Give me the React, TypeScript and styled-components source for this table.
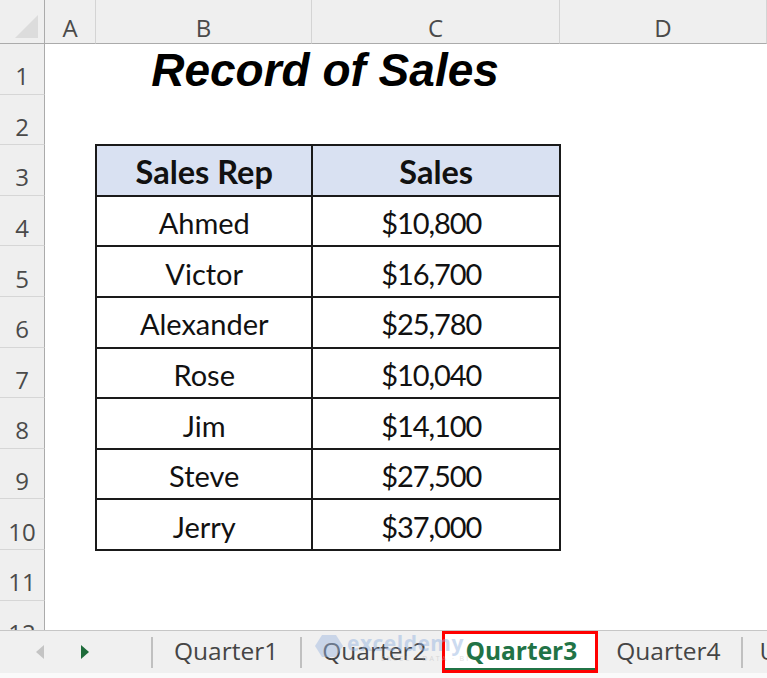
import React from "react";
import styled, { createGlobalStyle, css } from "styled-components";

const Global = createGlobalStyle`
  html, body { margin: 0; padding: 0; background: #ffffff; overflow: hidden; }
  #root { width: 767px; height: 678px; }
`;

const Window = styled.div`
  width: 767px;
  height: 678px;
  display: flex;
  flex-direction: column;
  overflow: hidden;
  background: #ffffff;
`;

const Sheet = styled.div`
  flex: 1;
  min-height: 0;
  display: grid;
  grid-template-columns: 45px 51px 216px 248px 207px 1fr;
  grid-template-rows: 44px repeat(12, 50.6px);
  overflow: hidden;
`;

const headerFont = css`
  font-family: "Open Sans", "Noto Sans", sans-serif;
  font-size: 24px;
  color: #4a4a4a;
`;

const Corner = styled.div`
  background: #efefef;
  border-right: 1px solid #ababab;
  border-bottom: 1px solid #ababab;
  position: relative;
  &::after {
    content: "";
    position: absolute;
    right: 6px;
    bottom: 5px;
    width: 0;
    height: 0;
    border-left: 23px solid transparent;
    border-bottom: 23px solid #dcdcdc;
  }
`;

const ColHead = styled.div<{ $last?: boolean }>`
  ${headerFont};
  background: #efefef;
  border-bottom: 1px solid #ababab;
  border-right: ${(p) => (p.$last ? "none" : "1px solid #d4d4d4")};
  display: flex;
  align-items: center;
  justify-content: center;
  padding-top: 11px;
  box-sizing: border-box;
`;

const RowHead = styled.div<{ $row: number }>`
  ${headerFont};
  grid-column: 1;
  grid-row: ${(p) => p.$row + 1};
  background: #efefef;
  border-right: 1px solid #ababab;
  border-bottom: 1px solid #d6d6d6;
  display: flex;
  align-items: center;
  justify-content: center;
  padding-top: 14px;
  box-sizing: border-box;
`;

const Title = styled.div`
  grid-column: 3 / span 2;
  grid-row: 2;
  display: flex;
  align-items: center;
  justify-content: center;
  font-family: "Liberation Sans", Arial, sans-serif;
  font-weight: bold;
  font-style: italic;
  font-size: 46px;
  color: #000000;
  padding: 2px 6px 0 0;
`;

const TableWrap = styled.div`
  grid-column: 3 / span 2;
  grid-row: 4 / span 8;
  margin: -1px -1px 0 -1px;
`;

const Table = styled.table`
  border-collapse: collapse;
  width: 466px;
  font-family: Lato, "Open Sans", sans-serif;
  font-size: 29px;
  color: #111111;
`;

const Tr = styled.tr`
  height: 50.6px;
`;

const Th = styled.th<{ $w: number }>`
  width: ${(p) => p.$w}px;
  padding: 3px 0 0 0;
  line-height: 1.1;
  background: #d9e1f2;
  border: 2px solid #1a1a1a;
  font-weight: bold;
  font-size: 32.5px;
  text-align: center;
`;

const Td = styled.td<{ $num?: boolean }>`
  padding: 4px ${(p) => (p.$num ? "10px" : "0")} 0 0;
  line-height: 1.1;
  border: 2px solid #1a1a1a;
  text-align: center;
  font-weight: normal;
  letter-spacing: ${(p) => (p.$num ? "-1.1px" : "0")};
`;

const TabBar = styled.div`
  height: 48px;
  flex-shrink: 0;
  box-sizing: border-box;
  border-top: 1px solid #c6c6c6;
  background: #f0f0f0;
  border-bottom: 5px solid #fafafa;
  display: flex;
  align-items: stretch;
  position: relative;
  overflow: hidden;
`;

const Nav = styled.div`
  width: 151px;
  flex-shrink: 0;
  display: flex;
  align-items: center;
  padding-left: 36px;
  gap: 37px;
  box-sizing: border-box;
`;

const Arrow = styled.span<{ $dir: "left" | "right"; $color: string }>`
  width: 0;
  height: 0;
  border-top: 7px solid transparent;
  border-bottom: 7px solid transparent;
  ${(p) =>
    p.$dir === "left"
      ? `border-right: 8px solid ${p.$color};`
      : `border-left: 8px solid ${p.$color};`}
`;

const Sep = styled.span`
  width: 2px;
  align-self: center;
  height: 31px;
  background: #c0c0c0;
  flex-shrink: 0;
`;

const Tab = styled.div<{ $active?: boolean; $pl: number; $pr: number }>`
  font-family: "Open Sans", "Noto Sans", sans-serif;
  font-size: 24.5px;
  display: flex;
  align-items: center;
  justify-content: center;
  padding: 0 ${(p) => p.$pr}px 3px ${(p) => p.$pl}px;
  color: #454545;
  flex-shrink: 0;
  white-space: nowrap;
  ${(p) =>
    p.$active &&
    css`
      background: #ffffff;
      color: #217346;
      font-weight: bold;
      border: 3px solid #ff0000;
      box-shadow: inset 0 -2px 0 #217346;
    `}
`;

const Watermark = styled.div`
  position: absolute;
  left: 314px;
  top: 2px;
  display: flex;
  align-items: flex-start;
  gap: 3px;
  opacity: 0.45;
  pointer-events: none;
`;

const MarkText = styled.div`
  display: flex;
  flex-direction: column;
  line-height: 1;
`;

const MarkWord = styled.span`
  font-family: "Open Sans", sans-serif;
  font-weight: bold;
  font-size: 21px;
  color: #8fb0e0;
  letter-spacing: 0.5px;
`;

const MarkSub = styled.span`
  font-family: "Open Sans", sans-serif;
  font-size: 7px;
  color: #b8b8b8;
  letter-spacing: 2px;
  margin-left: 34px;
  margin-top: 1px;
`;

const cols = ["A", "B", "C", "D", ""];
const rows: [string, string][] = [
  ["Ahmed", "$10,800"],
  ["Victor", "$16,700"],
  ["Alexander", "$25,780"],
  ["Rose", "$10,040"],
  ["Jim", "$14,100"],
  ["Steve", "$27,500"],
  ["Jerry", "$37,000"],
];

export default function App() {
  return (
    <>
      <Global />
      <Window>
        <Sheet>
          <Corner />
          {cols.map((c, i) => (
            <ColHead key={i} $last={i === cols.length - 1}>
              {c}
            </ColHead>
          ))}
          {Array.from({ length: 12 }, (_, i) => (
            <RowHead key={i} $row={i + 1}>
              {i + 1}
            </RowHead>
          ))}
          <Title>Record of Sales</Title>
          <TableWrap>
            <Table>
              <thead>
                <Tr>
                  <Th $w={216}>Sales Rep</Th>
                  <Th $w={248}>Sales</Th>
                </Tr>
              </thead>
              <tbody>
                {rows.map(([n, s]) => (
                  <Tr key={n}>
                    <Td>{n}</Td>
                    <Td $num>{s}</Td>
                  </Tr>
                ))}
              </tbody>
            </Table>
          </TableWrap>
        </Sheet>
        <TabBar>
          <Nav>
            <Arrow $dir="left" $color="#c4c4c4" />
            <Arrow $dir="right" $color="#1e6b3a" />
          </Nav>
          <Sep />
          <Tab $pl={21} $pr={22}>Quarter1</Tab>
          <Sep />
          <Tab $pl={20} $pr={16}>Quarter2</Tab>
          <Tab $active $pl={20} $pr={18}>Quarter3</Tab>
          <Tab $pl={18} $pr={21}>Quarter4</Tab>
          <Sep />
          <Tab $pl={16} $pr={0}>Unique</Tab>
          <Watermark>
            <svg width="30" height="26" viewBox="0 0 30 26">
              <path d="M8 2 L22 2 L29 13 L22 24 L8 24 L1 13 Z" fill="#9bb6e0" />
            </svg>
            <MarkText>
              <MarkWord>exceldemy</MarkWord>
              <MarkSub>EXCEL · DATA · BI</MarkSub>
            </MarkText>
          </Watermark>
        </TabBar>
      </Window>
    </>
  );
}
